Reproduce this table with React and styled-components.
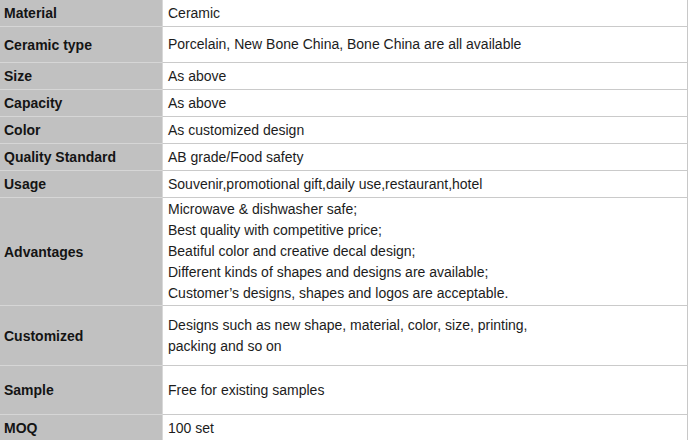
import React from 'react';
import styled, { createGlobalStyle } from 'styled-components';

const GlobalStyle = createGlobalStyle`
  html, body {
    margin: 0;
    padding: 0;
    background: #ffffff;
  }
`;

const Table = styled.table`
  width: 688px;
  table-layout: fixed;
  border-collapse: separate;
  border-spacing: 0;
  font-family: 'Liberation Sans', Arial, sans-serif;
  font-size: 14px;
  color: #111;
`;

const Row = styled.tr`
  height: ${(p) => p.$h}px;
`;

const Label = styled.td`
  width: 162px;
  padding: 0 0 0 4px;
  background: #c1c1c1;
  font-weight: bold;
  color: #141414;
  border-bottom: 1px solid #d6d6d6;
  vertical-align: middle;
  box-sizing: border-box;
  white-space: nowrap;
`;

const Value = styled.td`
  padding: 0 0 0 5px;
  background: #fff;
  border-left: 1px solid #d8d8d8;
  border-right: 1px solid #c8c8c8;
  border-bottom: 1px solid #cacaca;
  line-height: 21px;
  color: #1c1c1c;
  vertical-align: middle;
  box-sizing: border-box;
  white-space: nowrap;
`;

const specs = [
  { label: 'Material', h: 27, lines: ['Ceramic'] },
  { label: 'Ceramic type', h: 36, lines: ['Porcelain, New Bone China, Bone China are all available'] },
  { label: 'Size', h: 27, lines: ['As above'] },
  { label: 'Capacity', h: 27, lines: ['As above'] },
  { label: 'Color', h: 27, lines: ['As customized design'] },
  { label: 'Quality Standard', h: 27, lines: ['AB grade/Food safety'] },
  { label: 'Usage', h: 27, lines: ['Souvenir,promotional gift,daily use,restaurant,hotel'] },
  {
    label: 'Advantages',
    h: 108,
    lines: [
      'Microwave & dishwasher safe;',
      'Best quality with competitive price;',
      'Beatiful color and creative decal design;',
      'Different kinds of shapes and designs are available;',
      'Customer\u2019s designs, shapes and logos are acceptable.',
    ],
  },
  {
    label: 'Customized',
    h: 60,
    lines: ['Designs such as new shape, material, color, size, printing,', 'packing and so on'],
  },
  { label: 'Sample', h: 49, lines: ['Free for existing samples'] },
  { label: 'MOQ', h: 27, lines: ['100 set'] },
];

const App = () => {
  return (
    <>
      <GlobalStyle />
      <Table>
        <tbody>
          {specs.map((s) => (
            <Row key={s.label} $h={s.h}>
              <Label>{s.label}</Label>
              <Value>
                {s.lines.map((line, i) => (
                  <div key={i}>{line}</div>
                ))}
              </Value>
            </Row>
          ))}
        </tbody>
      </Table>
    </>
  );
};

export default App;
